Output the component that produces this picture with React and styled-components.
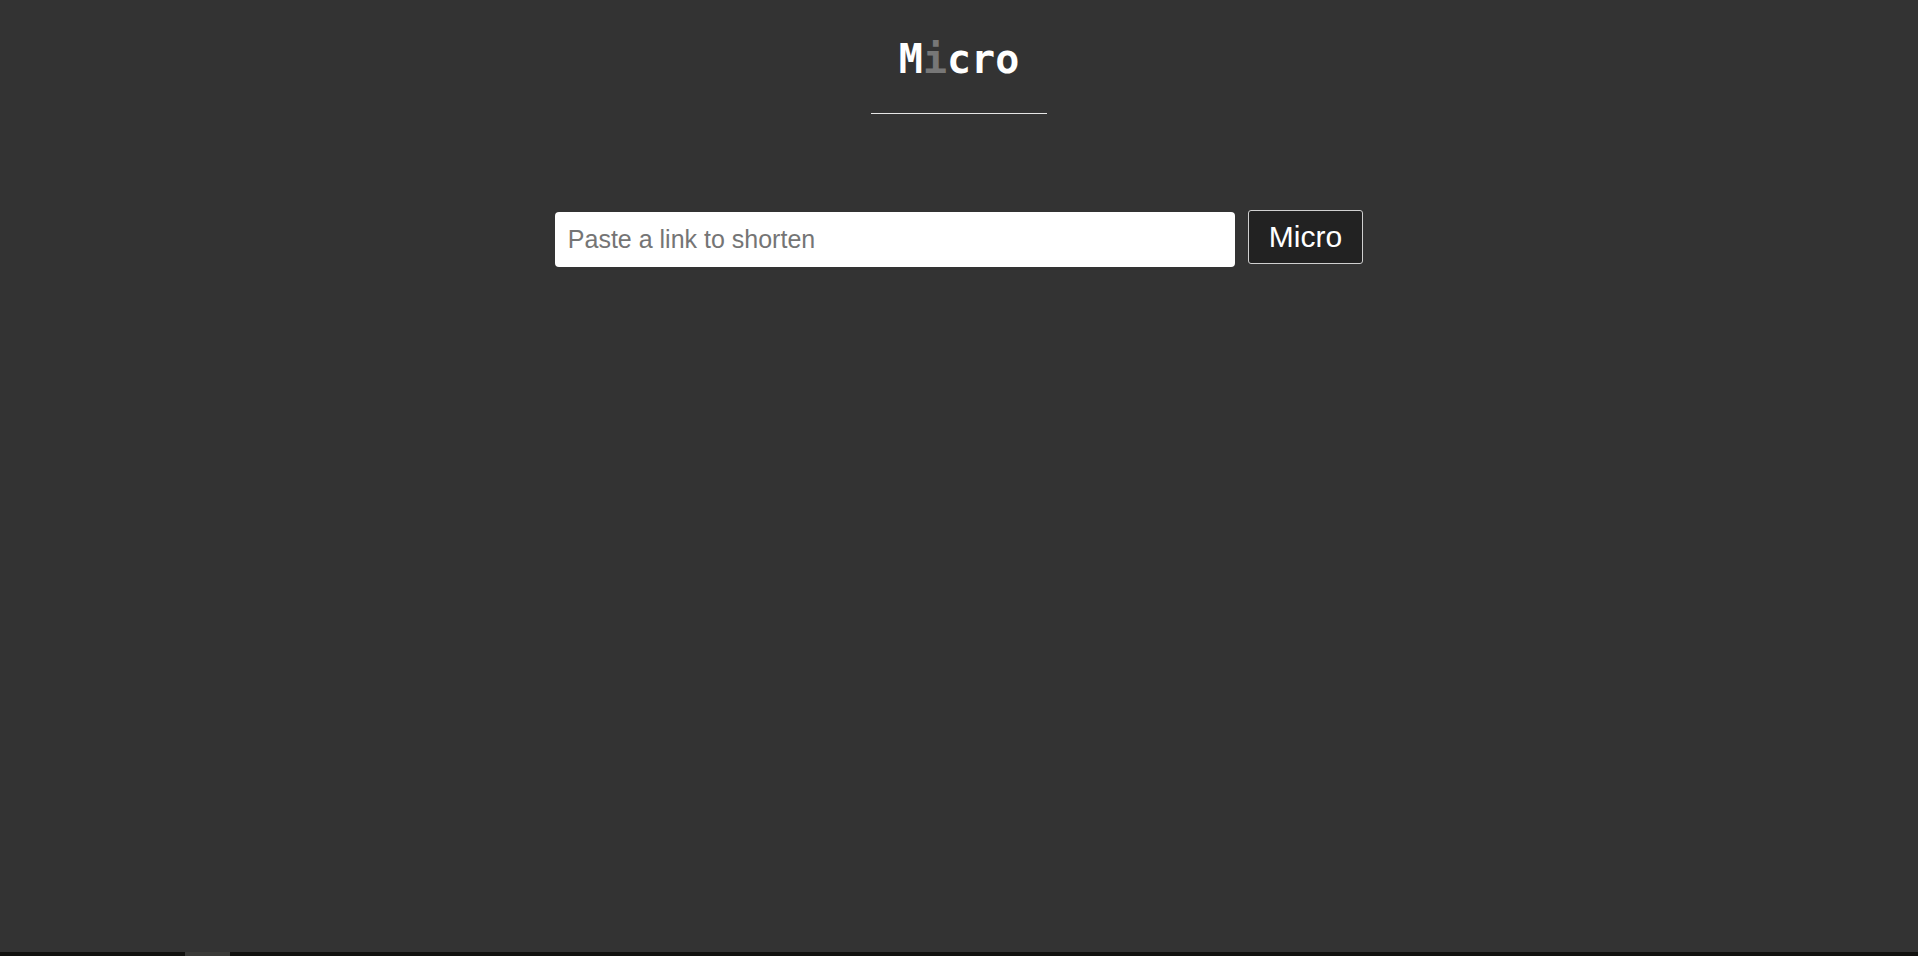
import { useState } from 'react'
import styled, { createGlobalStyle } from 'styled-components'

const GlobalStyle = createGlobalStyle`
  html, body {
    margin: 0;
    padding: 0;
    background: #333333;
    font-family: "Liberation Sans", Arial, sans-serif;
  }
`

function App() {
  const [link, setLink] = useState('')

  return (
    <>
      <GlobalStyle />
      <Page>
        <Main>
          <Title>
            M<Dim>i</Dim>cro
          </Title>
          <Rule />
          <Form onSubmit={(e) => e.preventDefault()}>
            <LinkInput
              type="text"
              placeholder="Paste a link to shorten"
              value={link}
              onChange={(e) => setLink(e.target.value)}
              autoFocus
            />
            <ShortenButton type="submit">Micro</ShortenButton>
          </Form>
        </Main>
        <BottomBar>
          <BarThumb />
        </BottomBar>
      </Page>
    </>
  )
}

export default App

/* ------- Styled Components ------- */

const Page = styled.div`
  display: flex;
  flex-direction: column;
  height: 100vh;
`

const Main = styled.main`
  flex: 1;
  display: flex;
  flex-direction: column;
  align-items: center;
  padding-top: 35px;
`

const Title = styled.h1`
  margin: 0;
  font-family: "DejaVu Sans Mono", monospace;
  font-weight: bold;
  font-size: 40px;
  line-height: 48px;
  color: #ffffff;
`

const Dim = styled.span`
  color: #777777;
`

const Rule = styled.div`
  width: 176px;
  height: 1px;
  background: #e6e6e6;
  margin-top: 30px;
`

const Form = styled.form`
  display: flex;
  align-items: flex-start;
  gap: 13px;
  margin-top: 96px;
`

const LinkInput = styled.input`
  box-sizing: border-box;
  width: 680px;
  height: 55px;
  margin-top: 2px;
  padding: 0 13px;
  border: none;
  border-radius: 4px;
  background: #ffffff;
  font-family: "Liberation Sans", Arial, sans-serif;
  font-size: 25px;
  color: #222;
  outline: none;

  &::placeholder {
    color: #757575;
  }
`

const ShortenButton = styled.button`
  box-sizing: border-box;
  height: 54px;
  padding: 0 20px;
  background: #222222;
  border: 1px solid #d0d0d0;
  border-radius: 3px;
  color: #ffffff;
  font-family: "Liberation Sans", Arial, sans-serif;
  font-size: 30px;
  cursor: pointer;
`

const BottomBar = styled.div`
  height: 4px;
  background: #11110f;
  display: flex;
  padding-left: 185px;
`

const BarThumb = styled.div`
  width: 45px;
  background: #3a3a38;
`
